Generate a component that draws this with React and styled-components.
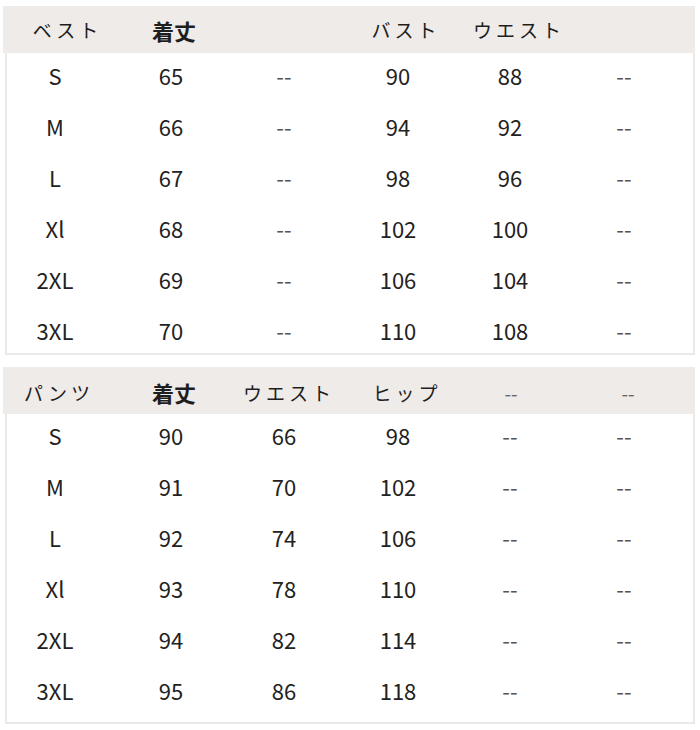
import React from 'react';
import styled, { createGlobalStyle } from 'styled-components';

const GlobalStyle = createGlobalStyle`
  body {
    margin: 0;
    background: #ffffff;
    font-family: "Noto Sans CJK JP", "Noto Sans", sans-serif;
    color: #222222;
  }
`;

const Page = styled.div`
  width: 700px;
  padding: 6px 5px 0 3px;
  box-sizing: border-box;
  display: flex;
  flex-direction: column;
  gap: 12px;
`;

const Table = styled.div`
  display: flex;
  flex-direction: column;
`;

const columns = '100px 132px 94px 134px 90px 1fr';

const HeaderRow = styled.div`
  display: grid;
  grid-template-columns: ${columns};
  align-items: center;
  height: 47px;
  background: #efebe8;
`;

const HeaderCell = styled.div`
  text-align: center;
  font-size: ${p => (p.$bold ? '22px' : '19px')};
  font-weight: ${p => (p.$bold ? 700 : 400)};
  letter-spacing: ${p => (p.$bold || p.$dash ? '0' : '4px')};
  padding-left: ${p => p.$shift || 0}px;
  padding-top: ${p => p.$drop || 0}px;
  color: ${p => (p.$dash ? '#666' : '#1e1e1e')};
  line-height: 1;
  white-space: nowrap;
`;

const Body = styled.div`
  display: flex;
  flex-direction: column;
  margin-left: 2px;
  border: 2px solid #ebe9e6;
  border-top: none;
`;

const Row = styled.div`
  display: grid;
  grid-template-columns: ${columns};
  align-items: start;
  height: 51px;
  margin-left: -2px;
  &:last-child {
    height: ${p => p.$lastHeight}px;
  }
`;

const Cell = styled.div`
  text-align: center;
  font-size: 22px;
  line-height: 1;
  padding-top: ${p => p.$top}px;
  color: ${p => (p.$dash ? '#555' : '#222')};
`;

const vestHead = [
  { t: 'ベスト', shift: 29 },
  { t: '着丈', bold: true, shift: 10 },
  { t: '' },
  { t: 'バスト', shift: 20 },
  { t: 'ウエスト', shift: 10 },
  { t: '' },
];

const vestRows = [
  ['S', '65', '--', '90', '88', '--'],
  ['M', '66', '--', '94', '92', '--'],
  ['L', '67', '--', '98', '96', '--'],
  ['Xl', '68', '--', '102', '100', '--'],
  ['2XL', '69', '--', '106', '104', '--'],
  ['3XL', '70', '--', '110', '108', '--'],
];

const pantsHead = [
  { t: 'パンツ', shift: 12, drop: 3 },
  { t: '着丈', bold: true, shift: 10, drop: 3 },
  { t: 'ウエスト', shift: 8, drop: 3 },
  { t: 'ヒップ', shift: 22, drop: 3 },
  { t: '--', dash: true, shift: 6, drop: 3 },
  { t: '--', dash: true, shift: 8, drop: 3 },
];

const pantsRows = [
  ['S', '90', '66', '98', '--', '--'],
  ['M', '91', '70', '102', '--', '--'],
  ['L', '92', '74', '106', '--', '--'],
  ['Xl', '93', '78', '110', '--', '--'],
  ['2XL', '94', '82', '114', '--', '--'],
  ['3XL', '95', '86', '118', '--', '--'],
];

const SizeTable = ({ head, rows, top, lastHeight }) => (
  <Table>
    <HeaderRow>
      {head.map((h, i) => (
        <HeaderCell key={i} $bold={h.bold} $dash={h.dash} $shift={h.shift} $drop={h.drop}>
          {h.t}
        </HeaderCell>
      ))}
    </HeaderRow>
    <Body>
      {rows.map((r, i) => (
        <Row key={i} $lastHeight={lastHeight}>
          {r.map((v, j) => (
            <Cell key={j} $top={top} $dash={v === '--'}>{v}</Cell>
          ))}
        </Row>
      ))}
    </Body>
  </Table>
);

const App = () => (
  <>
    <GlobalStyle />
    <Page>
      <SizeTable head={vestHead} rows={vestRows} top={11} lastHeight={45} />
      <SizeTable head={pantsHead} rows={pantsRows} top={10} lastHeight={53} />
    </Page>
  </>
);

export default App;
